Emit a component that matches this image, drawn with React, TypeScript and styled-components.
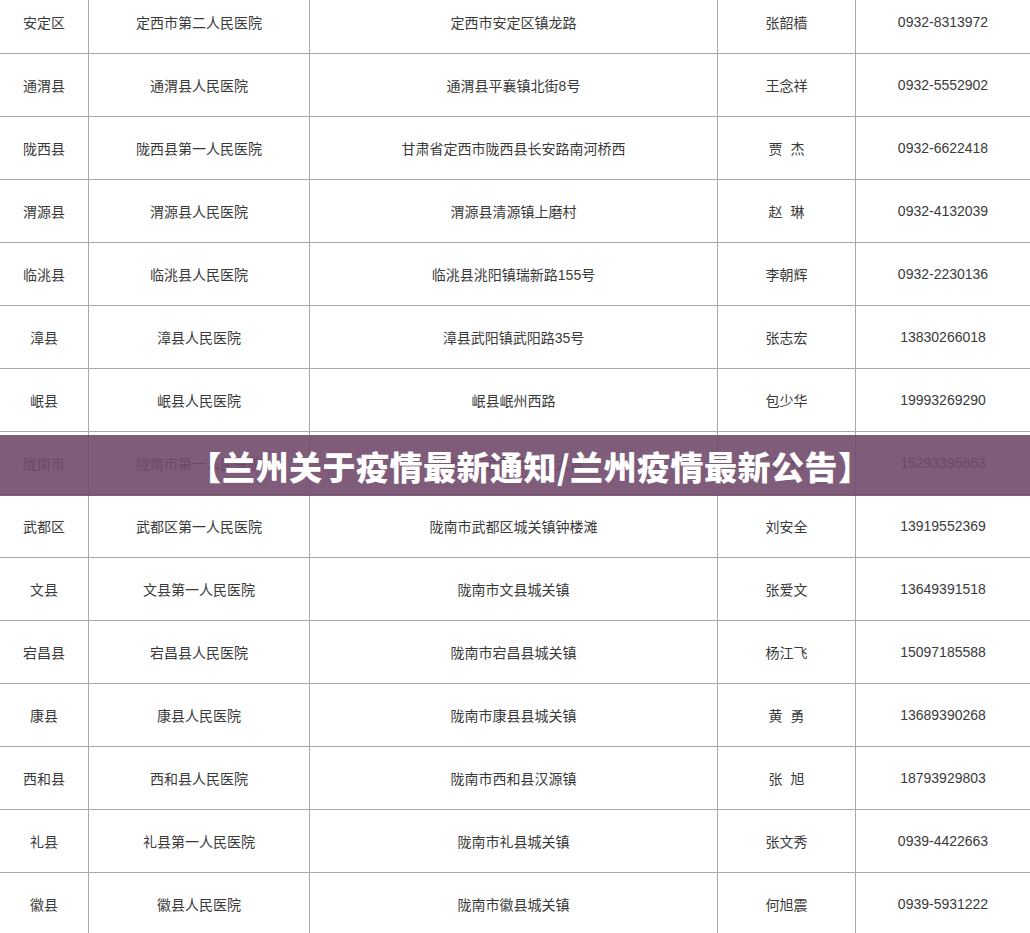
import React from "react";
import styled, { createGlobalStyle } from "styled-components";

const Global = createGlobalStyle`
  body { margin: 0; background: #fff; font-family: "Liberation Sans", "Noto Sans CJK SC", sans-serif; }
`;

const Page = styled.div`
  position: relative;
  width: 1030px;
  height: 933px;
  overflow: hidden;
`;

const Table = styled.table`
  border-collapse: collapse;
  width: 1031px;
  margin-top: -10px;
  margin-left: -1px;
  table-layout: fixed;
`;

const Cell = styled.td`
  border: 1px solid #a8a8a8;
  height: 62px;
  padding: 0;
  text-align: center;
  vertical-align: middle;
  font-size: 14px;
  color: #3a3a3a;
  white-space: pre;
`;

const Banner = styled.div`
  position: absolute;
  left: 0;
  right: 0;
  top: 435px;
  height: 61px;
  background: rgba(112, 74, 108, 0.9);
  display: flex;
  align-items: center;
  justify-content: center;
  color: #fff;
  font-weight: 900;
  font-size: 33px;
  font-family: "Noto Sans CJK SC", sans-serif;
  letter-spacing: 0.5px;
  padding-left: 30px;
`;

const rows: string[][] = [
  ["安定区", "定西市第二人民医院", "定西市安定区镇龙路", "张韶樯", "0932-8313972"],
  ["通渭县", "通渭县人民医院", "通渭县平襄镇北街8号", "王念祥", "0932-5552902"],
  ["陇西县", "陇西县第一人民医院", "甘肃省定西市陇西县长安路南河桥西", "贾  杰", "0932-6622418"],
  ["渭源县", "渭源县人民医院", "渭源县清源镇上磨村", "赵  琳", "0932-4132039"],
  ["临洮县", "临洮县人民医院", "临洮县洮阳镇瑞新路155号", "李朝辉", "0932-2230136"],
  ["漳县", "漳县人民医院", "漳县武阳镇武阳路35号", "张志宏", "13830266018"],
  ["岷县", "岷县人民医院", "岷县岷州西路", "包少华", "19993269290"],
  ["陇南市", "陇南市第一人民医院", "陇南市武都区长江大道", "王  伟", "15293395663"],
  ["武都区", "武都区第一人民医院", "陇南市武都区城关镇钟楼滩", "刘安全", "13919552369"],
  ["文县", "文县第一人民医院", "陇南市文县城关镇", "张爱文", "13649391518"],
  ["宕昌县", "宕昌县人民医院", "陇南市宕昌县城关镇", "杨江飞", "15097185588"],
  ["康县", "康县人民医院", "陇南市康县县城关镇", "黄  勇", "13689390268"],
  ["西和县", "西和县人民医院", "陇南市西和县汉源镇", "张  旭", "18793929803"],
  ["礼县", "礼县第一人民医院", "陇南市礼县城关镇", "张文秀", "0939-4422663"],
  ["徽县", "徽县人民医院", "陇南市徽县城关镇", "何旭震", "0939-5931222"],
];

const widths = [89, 221, 408, 138, 175];

export default function App() {
  return (
    <Page>
      <Global />
      <Table>
        <colgroup>
          {widths.map((w, i) => (
            <col key={i} style={{ width: w }} />
          ))}
        </colgroup>
        <tbody>
          {rows.map((r, i) => (
            <tr key={i}>
              {r.map((c, j) => (
                <Cell key={j}>{c}</Cell>
              ))}
            </tr>
          ))}
        </tbody>
      </Table>
      <Banner>【兰州关于疫情最新通知/兰州疫情最新公告】</Banner>
    </Page>
  );
}
